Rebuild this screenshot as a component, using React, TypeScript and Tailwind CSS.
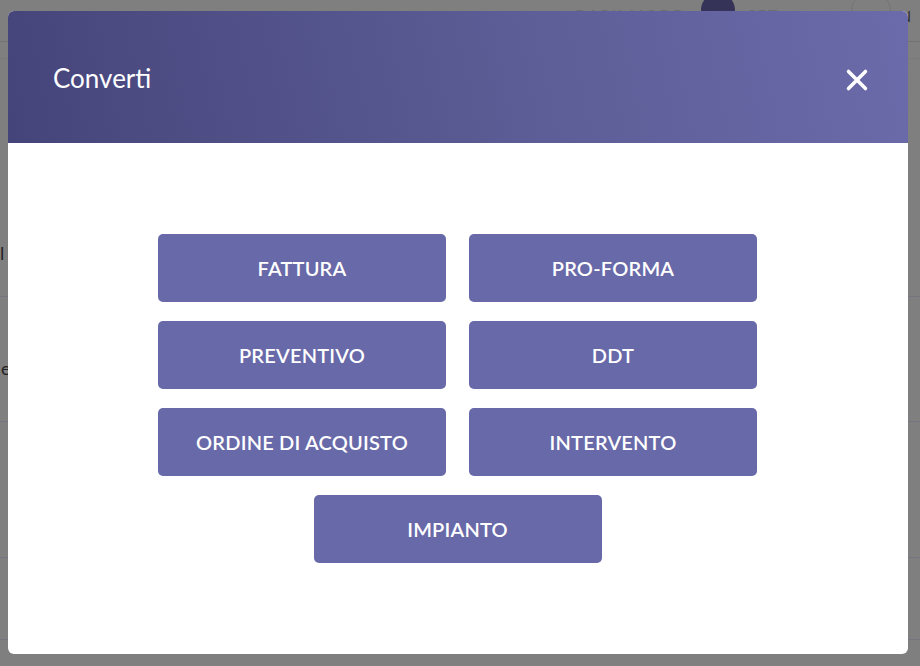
import { X } from 'lucide-react';

const options = ['FATTURA', 'PRO-FORMA', 'PREVENTIVO', 'DDT', 'ORDINE DI ACQUISTO', 'INTERVENTO'];

const ConvertButton = ({ label }: { label: string }) => (
  <button className="w-[288px] h-[68px] rounded-[5px] bg-[#6869a8] text-white text-[20px] font-semibold tracking-[0.2px] flex items-center justify-center">
    {label}
  </button>
);

const App = () => {
  return (
    <div className="relative w-[920px] h-[666px] overflow-hidden bg-[#7f7f7f]" style={{ fontFamily: '"Source Sans Pro", Lato, "Noto Sans", sans-serif' }}>
      {/* Pagina dietro l'overlay */}
      <div className="absolute inset-0">
        <div className="h-[42px] border-b border-[#727272] flex items-center">
          <span className="ml-[575px] text-[15px] tracking-[2px] text-[#6e6e6e] -mt-[10px]">DARK MODE</span>
          <div className="ml-[18px] -mt-[22px] w-[34px] h-[34px] rounded-full bg-[#353358]" />
          <span className="ml-[12px] text-[15px] tracking-[2px] text-[#6e6e6e] -mt-[10px]">SET</span>
          <div className="ml-[72px] -mt-[20px] w-[40px] h-[40px] rounded-full border border-[#747474]" />
          <span className="ml-[-12px] text-[16px] text-[#333] -mt-[10px]">CEN</span>
        </div>
        <div className="h-[17px] border-b border-[#7a7a7a]" />
        <div className="h-[238px] border-b border-[#757581] pt-[181px]">
          <span className="text-[18px] text-[#222]">l</span>
        </div>
        <div className="h-[125px] border-b border-[#757581] pt-[58px]">
          <span className="text-[18px] text-[#222] pl-[1px]">e</span>
        </div>
        <div className="h-[136px] border-b border-[#757581]" />
        <div className="h-[82px] border-b border-[#757581]" />
      </div>

      {/* Modale */}
      <div className="absolute left-[8px] top-[11px] w-[900px] h-[643px] rounded-[6px] bg-white overflow-hidden flex flex-col">
        <div className="h-[132px] shrink-0 bg-[linear-gradient(78deg,#45447a_0%,#5a5a93_50%,#6b6bab_100%)] flex items-center justify-between pl-[45px] pr-[34px]">
          <h2 className="text-[26px] text-white font-normal mt-[2px]">Converti</h2>
          <X className="text-white mt-[5px]" size={34} strokeWidth={2.5} />
        </div>
        <div className="flex-1 pt-[91px] pl-[150px]">
          <div className="w-[599px] flex flex-col items-center gap-[19px]">
            <div className="grid grid-cols-2 gap-x-[23px] gap-y-[19px]">
              {options.map((o) => (
                <ConvertButton key={o} label={o} />
              ))}
            </div>
            <ConvertButton label="IMPIANTO" />
          </div>
        </div>
      </div>
    </div>
  );
};

export default App;
